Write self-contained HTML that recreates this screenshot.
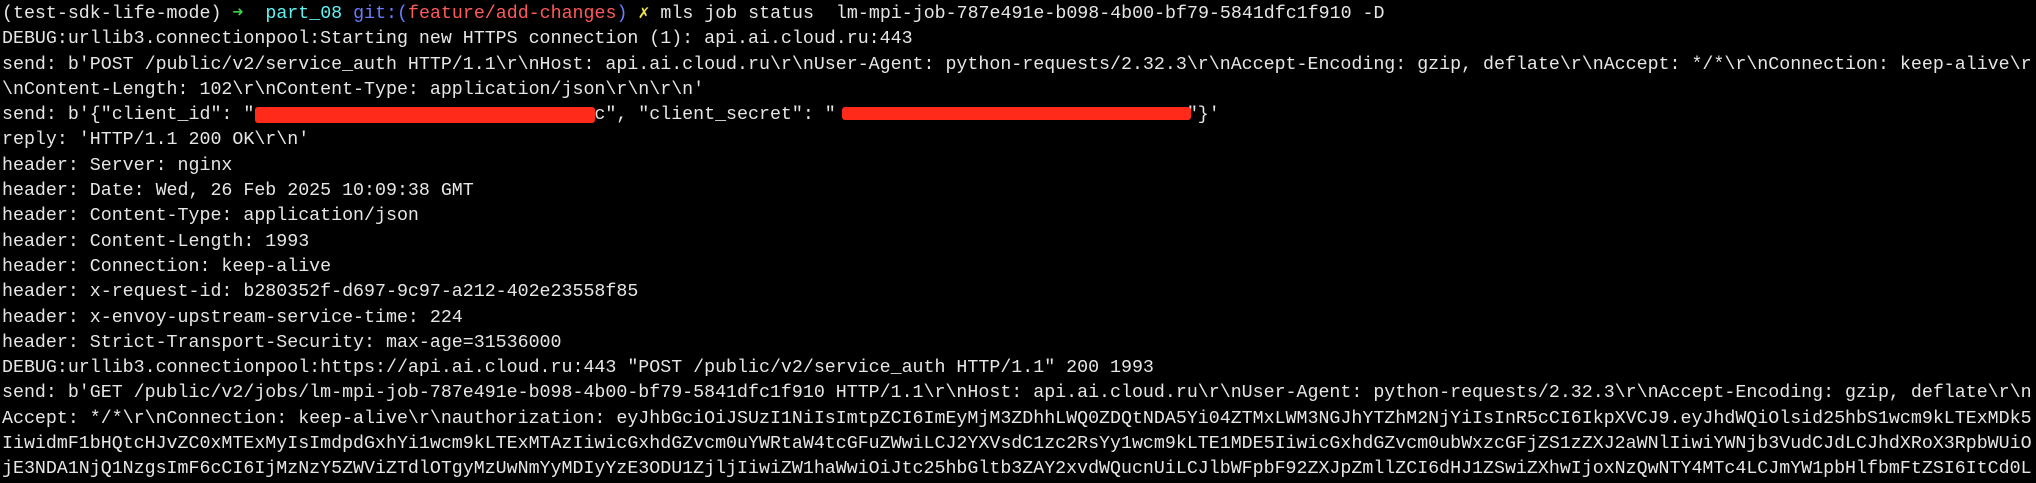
<!DOCTYPE html>
<html><head><meta charset="utf-8"><style>
html,body{margin:0;padding:0;background:#000;width:2036px;height:480px;overflow:hidden}
pre{margin:0;position:absolute;left:2px;top:2px;font-family:"Liberation Mono","DejaVu Sans Mono",monospace;font-size:18.3px;line-height:25.3px;color:#e6e6e6;white-space:pre}
.g{color:#3fd14a}.c{color:#5ef2f2}.b{color:#6c7cff}.r{color:#ff5a5a}.y{color:#f2e64a}
.red{position:absolute;background:#ff2a1a;border-radius:3px}
</style></head><body>
<pre>(test-sdk-life-mode) <span class="g">➜</span>  <span class="c">part_08</span> <span class="b">git:(</span><span class="r">feature/add-changes</span><span class="b">)</span> <span class="y">✗</span> mls job status  lm-mpi-job-787e491e-b098-4b00-bf79-5841dfc1f910 -D
DEBUG:urllib3.connectionpool:Starting new HTTPS connection (1): api.ai.cloud.ru:443
send: b'POST /public/v2/service_auth HTTP/1.1\r\nHost: api.ai.cloud.ru\r\nUser-Agent: python-requests/2.32.3\r\nAccept-Encoding: gzip, deflate\r\nAccept: */*\r\nConnection: keep-alive\r
\nContent-Length: 102\r\nContent-Type: application/json\r\n\r\n'
send: b'{"client_id": "                               c", "client_secret": "                                "}'
reply: 'HTTP/1.1 200 OK\r\n'
header: Server: nginx
header: Date: Wed, 26 Feb 2025 10:09:38 GMT
header: Content-Type: application/json
header: Content-Length: 1993
header: Connection: keep-alive
header: x-request-id: b280352f-d697-9c97-a212-402e23558f85
header: x-envoy-upstream-service-time: 224
header: Strict-Transport-Security: max-age=31536000
DEBUG:urllib3.connectionpool:https://api.ai.cloud.ru:443 "POST /public/v2/service_auth HTTP/1.1" 200 1993
send: b'GET /public/v2/jobs/lm-mpi-job-787e491e-b098-4b00-bf79-5841dfc1f910 HTTP/1.1\r\nHost: api.ai.cloud.ru\r\nUser-Agent: python-requests/2.32.3\r\nAccept-Encoding: gzip, deflate\r\n
Accept: */*\r\nConnection: keep-alive\r\nauthorization: eyJhbGciOiJSUzI1NiIsImtpZCI6ImEyMjM3ZDhhLWQ0ZDQtNDA5Yi04ZTMxLWM3NGJhYTZhM2NjYiIsInR5cCI6IkpXVCJ9.eyJhdWQiOlsid25hbS1wcm9kLTExMDk5
IiwidmF1bHQtcHJvZC0xMTExMyIsImdpdGxhYi1wcm9kLTExMTAzIiwicGxhdGZvcm0uYWRtaW4tcGFuZWwiLCJ2YXVsdC1zc2RsYy1wcm9kLTE1MDE5IiwicGxhdGZvcm0ubWxzcGFjZS1zZXJ2aWNlIiwiYWNjb3VudCJdLCJhdXRoX3RpbWUiO
jE3NDA1NjQ1NzgsImF6cCI6IjMzNzY5ZWViZTdlOTgyMzUwNmYyMDIyYzE3ODU1ZjljIiwiZW1haWwiOiJtc25hbGltb3ZAY2xvdWQucnUiLCJlbWFpbF92ZXJpZmllZCI6dHJ1ZSwiZXhwIjoxNzQwNTY4MTc4LCJmYW1pbHlfbmFtZSI6ItCd0L</pre>
<div class="red" style="left:255px;top:107px;width:340px;height:16px"></div>
<div class="red" style="left:842px;top:107px;width:349px;height:13px"></div>
</body></html>
